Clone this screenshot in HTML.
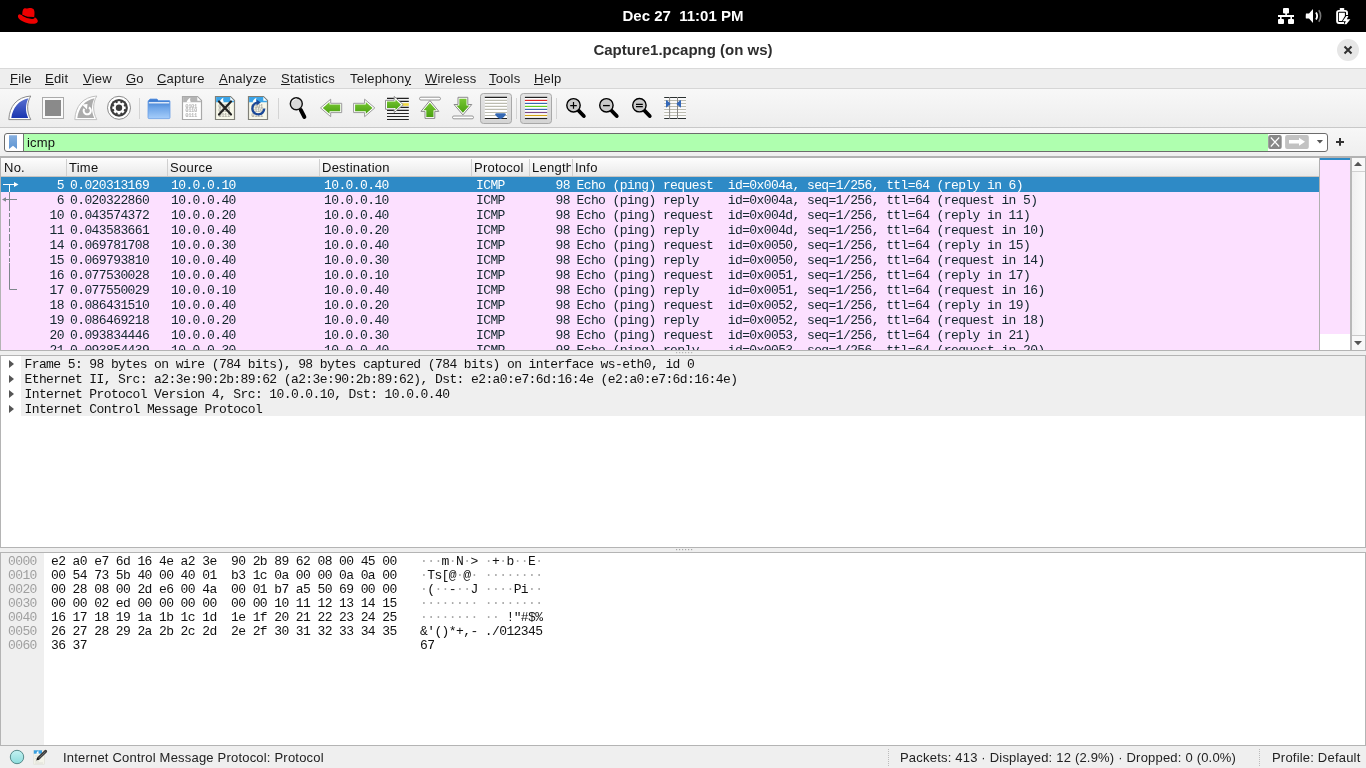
<!DOCTYPE html>
<html><head><meta charset="utf-8">
<style>
*{margin:0;padding:0;box-sizing:border-box}
html,body{width:1366px;height:768px;overflow:hidden;background:#fff;font-family:"Liberation Sans",sans-serif;}
.a{position:absolute}
#top{left:0;top:0;width:1366px;height:32px;background:#000}
#clock{left:0;top:0;width:1366px;height:32px;line-height:32px;text-align:center;color:#fff;font-weight:bold;font-size:15px}
#title{left:0;top:32px;width:1366px;height:36px;line-height:36px;text-align:center;color:#2e2e2e;font-weight:bold;font-size:15px}
#closebtn{left:1337px;top:39px;width:22px;height:22px;border-radius:50%;background:#e6e6e6}
#menubar{left:0;top:68px;width:1366px;height:21px;background:#eeeeee;border-top:1px solid #d9d9d9;border-bottom:1px solid #d6d6d6}
.menu{top:71px;font-size:13px;color:#1a1a1a;white-space:nowrap;letter-spacing:0.2px}
.menu u{text-decoration:underline;text-underline-offset:1px}
#toolbar{left:0;top:89px;width:1366px;height:39px;background:linear-gradient(#f8f8f8,#ededed);border-bottom:1px solid #c8c8c8}
.sep{top:98px;width:1px;height:21px;background:#d4d4d4}
#filterbar{left:0;top:128px;width:1366px;height:28px;background:linear-gradient(#f7f7f7,#efefef)}
#filter{left:4px;top:133px;width:1324px;height:19px;border:1px solid #6c6c6c;border-radius:3px;background:#fff;overflow:hidden}
#fgreen{left:18px;top:0;width:1245px;height:17px;background:#afffaf;border-left:1px solid #707070}
#ftext{left:22px;top:1px;font-size:13px;color:#111;letter-spacing:0.2px}
#plist{left:0;top:156px;width:1366px;height:195px;background:#fff;border:1px solid #b4b4b4;border-top:2px solid #b2b2b2;border-bottom:1px solid #b4b4b4}
#hdr{left:1px;top:158px;width:1319px;height:19px;background:linear-gradient(#fdfdfd,#e9e9e9);border-bottom:1px solid #c8c4c0}
.hc{top:160px;font-size:13px;color:#111;white-space:nowrap;letter-spacing:0.25px}
.hd{top:159px;width:1px;height:17px;background:#d0d0d0}
#rows{left:1px;top:177px;width:1318px;height:173px;overflow:hidden}
.row{left:0;width:1318px;height:15px;background:#fce0ff}
.sel{background:#2e8ac6}
.m{font-family:"Liberation Mono",monospace;font-size:13px;letter-spacing:-0.6px;white-space:pre;line-height:15px;color:#12272e;top:1px}
.sel .m{color:#fff}
.c0{right:1255px}
.c1{left:69px}.c2{left:170px}.c3{left:323px}.c4{left:475px}.c5{right:749px}.c6{left:575.5px}
#mm{left:1319px;top:158px;width:32px;height:192px;background:#fce0ff;border-left:1px solid #b0b0b0;border-right:1px solid #b8b8b8}
#sb{left:1351px;top:158px;width:14px;height:192px;background:linear-gradient(90deg,#f0f0f0,#fafafa);border-left:1px solid #b8b8b8}
#split1{left:0;top:351px;width:1366px;height:4px;background:#efefef}
#details{left:0;top:355px;width:1366px;height:193px;background:#fff;border:1px solid #b4b4b4}
.drow{left:21px;width:1344px;height:15px;background:#efefef}
.dm{font-family:"Liberation Mono",monospace;font-size:13px;letter-spacing:-0.6px;white-space:pre;line-height:15px;color:#111;left:24.5px;margin-top:1px}
.arr{left:9px;width:0;height:0;border-left:5px solid #555;border-top:4px solid transparent;border-bottom:4px solid transparent}
#split2{left:0;top:548px;width:1366px;height:5px;background:#efefef}
#hexp{left:0;top:552px;width:1366px;height:194px;background:#fff;border:1px solid #b4b4b4}
#offbg{left:1px;top:553px;width:43px;height:192px;background:#efefef}
#hexc{left:0;top:555px;width:1366px;height:192px}
.hm{font-family:"Liberation Mono",monospace;font-size:13px;letter-spacing:-0.6px;white-space:pre;line-height:14px;color:#111}
.off{left:8px;color:#a0a0a0}
.hexb{left:51px}
.asc{left:420px}
#status{left:0;top:746px;width:1366px;height:22px;background:#efefef}
.st{top:750px;font-size:13px;color:#222;white-space:nowrap;letter-spacing:0.2px}
.vsep{top:749px;width:1px;height:17px;border-left:1px dotted #bbb}

.dot{color:#a8a8a8}

</style></head><body>
<div id="wrap" style="position:absolute;left:0;top:0;width:1366px;height:768px;will-change:transform">
<div class="a" id="top"></div>
<div class="a" id="clock">Dec 27&nbsp;&nbsp;11:01 PM</div>
<div class="a" id="title">Capture1.pcapng (on ws)</div>
<div class="a" id="closebtn"></div>
<div class="a" id="menubar"></div>
<div class="a menu" style="left:10px"><u>F</u>ile</div>
<div class="a menu" style="left:45px"><u>E</u>dit</div>
<div class="a menu" style="left:83px"><u>V</u>iew</div>
<div class="a menu" style="left:126px"><u>G</u>o</div>
<div class="a menu" style="left:157px"><u>C</u>apture</div>
<div class="a menu" style="left:219px"><u>A</u>nalyze</div>
<div class="a menu" style="left:281px"><u>S</u>tatistics</div>
<div class="a menu" style="left:350px">Telephon<u>y</u></div>
<div class="a menu" style="left:425px"><u>W</u>ireless</div>
<div class="a menu" style="left:489px"><u>T</u>ools</div>
<div class="a menu" style="left:534px"><u>H</u>elp</div>
<div class="a" id="toolbar"></div>
<div class="a sep" style="left:139px"></div>
<div class="a sep" style="left:278px"></div>
<div class="a sep" style="left:516px"></div>
<div class="a sep" style="left:556px"></div>
<svg class="a" style="left:0;top:0" width="1366" height="768" viewBox="0 0 1366 768">
<defs>
<linearGradient id="gblue" x1="0" y1="0" x2="0" y2="1"><stop offset="0" stop-color="#5a70d0"/><stop offset="1" stop-color="#1a36b0"/></linearGradient>
<linearGradient id="gfold" x1="0" y1="0" x2="0" y2="1"><stop offset="0" stop-color="#3474cc"/><stop offset="0.45" stop-color="#6fa6e8"/><stop offset="1" stop-color="#a6cdfa"/></linearGradient>
<linearGradient id="ggreen" x1="0" y1="0" x2="0" y2="1"><stop offset="0" stop-color="#78c832"/><stop offset="1" stop-color="#4aa012"/></linearGradient>
<linearGradient id="gbtn" x1="0" y1="0" x2="0" y2="1"><stop offset="0" stop-color="#e4e4e4"/><stop offset="1" stop-color="#d4d4d4"/></linearGradient>
<linearGradient id="gcirc" x1="0" y1="0" x2="0" y2="1"><stop offset="0" stop-color="#c8f0f0"/><stop offset="1" stop-color="#8adada"/></linearGradient>
</defs>
<!-- red hat -->
<g fill="#ee0000">
<path d="M22.5,16.5 C22,13 22.5,9 24.5,8.3 C26,7.9 27,8.8 28.3,8.3 C30,7.6 32.5,7.8 33.8,9.5 C34.8,11 34.6,14 34.2,17 Z"/>
<path d="M19.5,14.2 C17.5,14.6 17.4,17.2 19.5,19.2 C22.5,22 28,23.8 33,23.7 C36.5,23.6 38.4,22.4 37.6,20.2 C37,18.6 35.5,17.6 34.3,17 C34.2,18 33.6,18.6 31.5,18.3 C28,17.8 24,16.5 22.3,15.3 Z"/>
</g>
<path d="M22.4,15.3 C25,17 29,18.2 32,18.5 C33.5,18.6 34.2,18.3 34.3,17" stroke="#000" stroke-width="1.2" fill="none"/>
<!-- network -->
<g fill="#fff">
<rect x="1283" y="8" width="6" height="5.5" rx="1"/>
<rect x="1285.3" y="13" width="1.6" height="3"/>
<rect x="1278" y="15" width="16" height="2"/>
<rect x="1280" y="16" width="1.6" height="3.5"/>
<rect x="1290.4" y="16" width="1.6" height="3.5"/>
<rect x="1278" y="19" width="6" height="5" rx="1"/>
<rect x="1288" y="19" width="6" height="5" rx="1"/>
</g>
<!-- speaker -->
<path d="M1306,13.5 L1309,13.5 L1313,9 L1313,23 L1309,18.5 L1306,18.5 C1305.6,18.5 1305.8,13.5 1306,13.5Z" fill="#fff"/>
<path d="M1316,12.5 C1317.3,14.5 1317.3,17.5 1316,19.5" stroke="#fff" stroke-width="1.8" fill="none"/>
<path d="M1318.8,10.3 C1321.2,13.5 1321.2,18.5 1318.8,21.7" stroke="#777" stroke-width="1.6" fill="none"/>
<!-- battery -->
<rect x="1339.8" y="7.9" width="4.4" height="2.5" rx="0.6" fill="#fff"/>
<path d="M1347,15 L1347,12.8 C1347,11.6 1346.3,10.9 1345.1,10.9 L1339,10.9 C1337.8,10.9 1337.1,11.6 1337.1,12.8 L1337.1,21.1 C1337.1,22.3 1337.8,23 1339,23 L1344,23" stroke="#fff" stroke-width="1.9" fill="none"/>
<path d="M1338.9,12.8 L1344.9,12.8 L1344.9,16 L1341.9,21 L1338.9,21 Z" fill="#fff"/>
<path d="M1346.3,16 L1348.4,16 L1346.8,19.2 L1350.4,19.2 L1346.4,24.2 L1344.3,24.2 L1345.9,21.2 L1342.6,21.2 Z" fill="#fff"/>
<!-- title close X -->
<path d="M1344.5,46.5 L1351.5,53.5 M1351.5,46.5 L1344.5,53.5" stroke="#2e2e2e" stroke-width="2"/>

<!-- toolbar: shark fin (start) -->
<path d="M8.8,119.6 C9.5,106 17,97 30.8,96 C27,102 26.2,111 30.8,119.6 Z" fill="#fff" stroke="#8c8c8c" stroke-width="1"/>
<path d="M11.3,118 C12.5,108 19,100 28.5,98.3 C25.5,104 25,111 28.2,118 Z" fill="url(#gblue)"/>
<!-- stop -->
<rect x="42.5" y="97.5" width="21" height="21" fill="#fafafa" stroke="#aaaaaa" stroke-width="1"/>
<rect x="45" y="100" width="16" height="16" fill="#8a8a8a"/>
<!-- restart fin -->
<path d="M74.8,119.6 C75.5,106 83,97 96.8,96 C93,102 92.2,111 96.8,119.6 Z" fill="#fff" stroke="#c0c0c0" stroke-width="1"/>
<path d="M77.3,118 C78.5,108 85,100 94.5,98.3 C91.5,104 91,111 94.2,118 Z" fill="#acacac"/>
<path d="M84.2,108.8 A3.6,3.6 0 1 0 88.8,107.5" stroke="#fff" stroke-width="2" fill="none"/>
<path d="M82,104.5 L87.5,104 L87,109.5 Z" fill="#fff"/>
<!-- gear -->
<circle cx="119" cy="107.8" r="11.5" fill="#fff" stroke="#8a8a8a" stroke-width="1"/>
<circle cx="119" cy="107.8" r="8.9" fill="#3c3c3c"/>
<g fill="#fff" transform="translate(119,107.8)">
<circle r="5.3"/>
<rect x="-1.3" y="-6.6" width="2.6" height="13.2"/>
<rect x="-1.3" y="-6.6" width="2.6" height="13.2" transform="rotate(45)"/>
<rect x="-1.3" y="-6.6" width="2.6" height="13.2" transform="rotate(90)"/>
<rect x="-1.3" y="-6.6" width="2.6" height="13.2" transform="rotate(135)"/>
<circle r="3.2" fill="#3c3c3c"/>
</g>
<!-- folder -->
<path d="M148.5,100.5 L150,99 L157,99 L158.5,100.5 L169,100.5 Q170,100.5 170,101.5 L170,117.5 Q170,118.6 169,118.6 L149,118.6 Q148,118.6 148,117.5 L148,101.5 Q148,100.5 148.5,100.5Z" fill="url(#gfold)" stroke="#6a9ee6" stroke-width="0.8"/>
<rect x="148.8" y="102.2" width="20.5" height="1.2" fill="#fff"/>
<!-- doc grey (save) -->
<path d="M182.5,96.5 L197.5,96.5 L201.5,100.5 L201.5,119.5 L182.5,119.5 Z" fill="#fff" stroke="#a8a8a8" stroke-width="1.2"/>
<path d="M183.1,97.1 L197.2,97.1 L200.9,100.8 L200.9,102.2 L183.1,102.2Z" fill="#b4b4b4"/>
<path d="M197.3,97.1 L197.3,100.8 L200.9,100.8Z" fill="#fff"/>
<path d="M186.5,102.2 C187.5,99.5 189,98.5 190.5,97.8 C189.8,99.3 190,101 191,102.2Z" fill="#fff"/>
<g fill="#b4b4b4" font-family="Liberation Mono" font-size="5.6" font-weight="bold" letter-spacing="-0.45"><text x="185.3" y="107.5">0101</text><text x="185.3" y="112">0110</text><text x="185.3" y="116.5">0111</text></g>
<!-- doc close -->
<path d="M215.5,96.5 L230.5,96.5 L234.5,100.5 L234.5,119.5 L215.5,119.5 Z" fill="#f8f8ea" stroke="#808078" stroke-width="1.2"/>
<path d="M216.1,97.1 L230.2,97.1 L233.9,100.8 L233.9,102.2 L216.1,102.2Z" fill="#3aa4e8"/>
<path d="M230.3,97.1 L230.3,100.8 L233.9,100.8Z" fill="#fff"/>
<path d="M219.5,102.2 C220.5,99.5 222,98.5 223.5,97.8 C222.8,99.3 223,101 224,102.2Z" fill="#fff"/>
<g fill="#a8a8a0" font-family="Liberation Mono" font-size="5.6" font-weight="bold" letter-spacing="-0.45"><text x="218.3" y="107.5">0101</text><text x="218.3" y="112">0110</text><text x="218.3" y="116.5">0111</text></g>
<path d="M219,101.5 L231,114.5 M231,101.5 L219,114.5" stroke="#222" stroke-width="2.2" stroke-linecap="round"/>
<!-- doc reload -->
<path d="M248.5,96.5 L263.5,96.5 L267.5,100.5 L267.5,119.5 L248.5,119.5 Z" fill="#f8f8ea" stroke="#808078" stroke-width="1.2"/>
<path d="M249.1,97.1 L263.2,97.1 L266.9,100.8 L266.9,102.2 L249.1,102.2Z" fill="#3aa4e8"/>
<path d="M263.3,97.1 L263.3,100.8 L266.9,100.8Z" fill="#fff"/>
<path d="M252.5,102.2 C253.5,99.5 255,98.5 256.5,97.8 C255.8,99.3 256,101 257,102.2Z" fill="#fff"/>
<g fill="#a8a8a0" font-family="Liberation Mono" font-size="5.6" font-weight="bold" letter-spacing="-0.45"><text x="251.3" y="107.5">0101</text><text x="251.3" y="112">0110</text><text x="251.3" y="116.5">0111</text></g>
<path d="M264.3,108.5 A6,6 0 1 1 257.5,102.5" stroke="#1a4898" stroke-width="2.2" fill="none"/>
<path d="M256.5,99.5 L260.8,102.5 L256.5,105.5 Z" fill="#1a4898"/>
<!-- find magnifier -->
<path d="M300.8,110 L304.4,117" stroke="#000" stroke-width="3.9" stroke-linecap="round"/>
<circle cx="296.3" cy="103.8" r="6" fill="#d8d8d8" stroke="#111" stroke-width="1.4"/>
<path d="M292.5,101.5 C293.3,99.8 294.8,99 296.5,99" stroke="#fff" stroke-width="0.9" fill="none"/>
<!-- left arrow -->
<path d="M320.5,107.9 L330.7,99.2 L330.7,103.3 L341.7,103.3 L341.7,112.6 L330.7,112.6 L330.7,116.7 Z" fill="#fff" stroke="#9a9a9a" stroke-width="1" stroke-linejoin="round"/>
<path d="M322.8,107.9 L329.5,102 L329.5,104.6 L340.2,104.6 L340.2,111.2 L329.5,111.2 L329.5,113.8 Z" fill="url(#ggreen)"/>
<!-- right arrow -->
<path d="M374.8,107.9 L364.6,99.2 L364.6,103.3 L353.6,103.3 L353.6,112.6 L364.6,112.6 L364.6,116.7 Z" fill="#fff" stroke="#9a9a9a" stroke-width="1" stroke-linejoin="round"/>
<path d="M372.5,107.9 L365.8,102 L365.8,104.6 L355.1,104.6 L355.1,111.2 L365.8,111.2 L365.8,113.8 Z" fill="url(#ggreen)"/>
<!-- go to packet -->
<g stroke="#222" stroke-width="1.1">
<path d="M387,98.4 H408.8 M387,101.4 H408.8 M387,107.4 H408.8 M387,110.4 H408.8 M387,113.5 H408.8 M387,116.5 H408.8 M387,119.5 H408.8"/>
</g>
<rect x="401" y="103.2" width="7.8" height="2.6" fill="#f0d840"/>
<path d="M403.2,104.7 L394.2,96.4 L394.2,100.3 L385.5,100.3 L385.5,109.3 L394.2,109.3 L394.2,112.6 Z" fill="#fff" stroke="#909090" stroke-width="1" stroke-linejoin="round"/>
<path d="M401,104.7 L395.5,99.4 L395.5,101.6 L387,101.6 L387,107.9 L395.5,107.9 L395.5,110 Z" fill="url(#ggreen)"/>
<!-- first packet up -->
<rect x="419.5" y="97.2" width="21" height="2.8" rx="1.4" fill="#fff" stroke="#8a8a8a" stroke-width="0.9"/>
<path d="M429.9,100.5 L438.8,111.4 L434.8,111.4 L434.8,118.4 L425,118.4 L425,111.4 L421,111.4 Z" fill="#fff" stroke="#8a8a8a" stroke-width="1" stroke-linejoin="round"/>
<path d="M429.9,102.7 L436.4,110.3 L433.5,110.3 L433.5,117 L426.3,117 L426.3,110.3 L423.4,110.3 Z" fill="url(#ggreen)"/>
<!-- last packet down -->
<rect x="452.5" y="116" width="21" height="2.8" rx="1.4" fill="#fff" stroke="#8a8a8a" stroke-width="0.9"/>
<path d="M462.9,114.9 L471.8,104.5 L467.8,104.5 L467.8,97.3 L458,97.3 L458,104.5 L454,104.5 Z" fill="#fff" stroke="#8a8a8a" stroke-width="1" stroke-linejoin="round"/>
<path d="M462.9,112.8 L469.4,105.6 L466.5,105.6 L466.5,98.7 L459.3,98.7 L459.3,105.6 L456.4,105.6 Z" fill="url(#ggreen)"/>
<!-- autoscroll button -->
<rect x="480.5" y="93.5" width="31" height="30" rx="3" fill="url(#gbtn)" stroke="#a8a8a8" stroke-width="1"/>
<rect x="484.8" y="96.9" width="22.2" height="22.2" fill="#fff"/>
<g stroke-width="1.1">
<path d="M484.8,97.4 H507 M484.8,118.5 H507" stroke="#222"/>
<path d="M484.8,100.4 H507 M484.8,103.4 H507 M484.8,106.4 H507 M484.8,109.4 H507 M484.8,112.5 H507 M484.8,115.5 H507" stroke="#bcbcb0"/>
</g>
<path d="M496.5,113.2 L504.5,113.2 Q506.3,113.2 505.8,114.8 Q504,117.5 501.8,118.6 Q500.5,119.2 499.2,118.6 Q497,117.5 495.2,114.8 Q494.7,113.2 496.5,113.2 Z" fill="#3468b4"/>
<!-- colorize button -->
<rect x="520.5" y="93.5" width="31" height="30" rx="3" fill="url(#gbtn)" stroke="#a8a8a8" stroke-width="1"/>
<rect x="524.9" y="96.9" width="22.3" height="22.2" fill="#fff"/>
<g stroke-width="1.2">
<path d="M524.9,97.4 H547.2" stroke="#222"/><path d="M524.9,100.4 H547.2" stroke="#e02424"/>
<path d="M524.9,103.4 H547.2" stroke="#3a68b0"/><path d="M524.9,106.4 H547.2" stroke="#62cc1c"/>
<path d="M524.9,109.4 H547.2" stroke="#3a68b0"/><path d="M524.9,112.5 H547.2" stroke="#7a4a88"/>
<path d="M524.9,115.5 H547.2" stroke="#d0a414"/><path d="M524.9,118.5 H547.2" stroke="#222"/>
</g>
<!-- zoom in/out/normal -->
<g stroke="#000">
<path d="M578.5,110.5 L583.8,116" stroke-width="3.9" stroke-linecap="round"/>
<circle cx="573.5" cy="105.3" r="6.7" fill="#cacaca" stroke-width="1.4"/>
<path d="M570.2,105.6 H576.8 M573.5,102.1 V108.8" stroke-width="1.2"/>
<path d="M611.4,110.5 L616.7,116" stroke-width="3.9" stroke-linecap="round"/>
<circle cx="606.4" cy="105.3" r="6.7" fill="#cacaca" stroke-width="1.4"/>
<path d="M603,105.6 H609.8" stroke-width="1.3"/>
<path d="M644.4,110.5 L649.7,116" stroke-width="3.9" stroke-linecap="round"/>
<circle cx="639.4" cy="105.2" r="6.7" fill="#cacaca" stroke-width="1.4"/>
<path d="M636,104.4 H642.8 M636,106.6 H642.8" stroke-width="1.2"/>
</g>
<!-- resize columns -->
<rect x="664.2" y="97" width="21.8" height="22" fill="#fafafa"/>
<g stroke-width="1.1">
<path d="M664.2,100.5 H686 M664.2,103.5 H686 M664.2,106.5 H686 M664.2,109.5 H686 M664.2,112.5 H686 M664.2,115.5 H686" stroke="#bcbcb0"/>
<path d="M664.2,97.5 H686 M664.2,118.5 H686" stroke="#2a3030" stroke-width="1.2"/>
<path d="M669.6,97 V119 M677.5,97 V119" stroke="#8a8a88" stroke-width="1"/>
</g>
<path d="M666,100.6 Q666,99.8 666.8,100.3 L670.2,103.3 Q670.6,103.8 670.2,104.3 L666.8,107.3 Q666,107.8 666,107 Z" fill="#3468b8"/>
<path d="M681,100.6 Q681,99.8 680.2,100.3 L676.8,103.3 Q676.4,103.8 676.8,104.3 L680.2,107.3 Q681,107.8 681,107 Z" fill="#3468b8"/>
</svg>

<div class="a" id="filterbar"></div>
<div class="a" id="filter"><div class="a" id="fgreen"></div><div class="a" id="ftext">icmp</div></div>
<div class="a" id="plist"></div>
<div class="a" id="hdr"></div>
<div class="a hc" style="left:4px">No.</div>
<div class="a hd" style="left:66px"></div>
<div class="a hc" style="left:69px">Time</div>
<div class="a hd" style="left:167px"></div>
<div class="a hc" style="left:170px">Source</div>
<div class="a hd" style="left:319px"></div>
<div class="a hc" style="left:322px">Destination</div>
<div class="a hd" style="left:471px"></div>
<div class="a hc" style="left:474px">Protocol</div>
<div class="a hd" style="left:529px"></div>
<div class="a hc" style="left:532px;width:39px;overflow:hidden">Length</div>
<div class="a hd" style="left:572px"></div>
<div class="a hc" style="left:575px">Info</div>
<div class="a" id="rows">
<div class="a row sel" style="top:0px"><span class="a m c0">5</span><span class="a m c1">0.020313169</span><span class="a m c2">10.0.0.10</span><span class="a m c3">10.0.0.40</span><span class="a m c4">ICMP</span><span class="a m c5">98</span><span class="a m c6">Echo (ping) request  id=0x004a, seq=1/256, ttl=64 (reply in 6)</span></div>
<div class="a row" style="top:15px"><span class="a m c0">6</span><span class="a m c1">0.020322860</span><span class="a m c2">10.0.0.40</span><span class="a m c3">10.0.0.10</span><span class="a m c4">ICMP</span><span class="a m c5">98</span><span class="a m c6">Echo (ping) reply    id=0x004a, seq=1/256, ttl=64 (request in 5)</span></div>
<div class="a row" style="top:30px"><span class="a m c0">10</span><span class="a m c1">0.043574372</span><span class="a m c2">10.0.0.20</span><span class="a m c3">10.0.0.40</span><span class="a m c4">ICMP</span><span class="a m c5">98</span><span class="a m c6">Echo (ping) request  id=0x004d, seq=1/256, ttl=64 (reply in 11)</span></div>
<div class="a row" style="top:45px"><span class="a m c0">11</span><span class="a m c1">0.043583661</span><span class="a m c2">10.0.0.40</span><span class="a m c3">10.0.0.20</span><span class="a m c4">ICMP</span><span class="a m c5">98</span><span class="a m c6">Echo (ping) reply    id=0x004d, seq=1/256, ttl=64 (request in 10)</span></div>
<div class="a row" style="top:60px"><span class="a m c0">14</span><span class="a m c1">0.069781708</span><span class="a m c2">10.0.0.30</span><span class="a m c3">10.0.0.40</span><span class="a m c4">ICMP</span><span class="a m c5">98</span><span class="a m c6">Echo (ping) request  id=0x0050, seq=1/256, ttl=64 (reply in 15)</span></div>
<div class="a row" style="top:75px"><span class="a m c0">15</span><span class="a m c1">0.069793810</span><span class="a m c2">10.0.0.40</span><span class="a m c3">10.0.0.30</span><span class="a m c4">ICMP</span><span class="a m c5">98</span><span class="a m c6">Echo (ping) reply    id=0x0050, seq=1/256, ttl=64 (request in 14)</span></div>
<div class="a row" style="top:90px"><span class="a m c0">16</span><span class="a m c1">0.077530028</span><span class="a m c2">10.0.0.40</span><span class="a m c3">10.0.0.10</span><span class="a m c4">ICMP</span><span class="a m c5">98</span><span class="a m c6">Echo (ping) request  id=0x0051, seq=1/256, ttl=64 (reply in 17)</span></div>
<div class="a row" style="top:105px"><span class="a m c0">17</span><span class="a m c1">0.077550029</span><span class="a m c2">10.0.0.10</span><span class="a m c3">10.0.0.40</span><span class="a m c4">ICMP</span><span class="a m c5">98</span><span class="a m c6">Echo (ping) reply    id=0x0051, seq=1/256, ttl=64 (request in 16)</span></div>
<div class="a row" style="top:120px"><span class="a m c0">18</span><span class="a m c1">0.086431510</span><span class="a m c2">10.0.0.40</span><span class="a m c3">10.0.0.20</span><span class="a m c4">ICMP</span><span class="a m c5">98</span><span class="a m c6">Echo (ping) request  id=0x0052, seq=1/256, ttl=64 (reply in 19)</span></div>
<div class="a row" style="top:135px"><span class="a m c0">19</span><span class="a m c1">0.086469218</span><span class="a m c2">10.0.0.20</span><span class="a m c3">10.0.0.40</span><span class="a m c4">ICMP</span><span class="a m c5">98</span><span class="a m c6">Echo (ping) reply    id=0x0052, seq=1/256, ttl=64 (request in 18)</span></div>
<div class="a row" style="top:150px"><span class="a m c0">20</span><span class="a m c1">0.093834446</span><span class="a m c2">10.0.0.40</span><span class="a m c3">10.0.0.30</span><span class="a m c4">ICMP</span><span class="a m c5">98</span><span class="a m c6">Echo (ping) request  id=0x0053, seq=1/256, ttl=64 (reply in 21)</span></div>
<div class="a row" style="top:165px"><span class="a m c0">21</span><span class="a m c1">0.093854439</span><span class="a m c2">10.0.0.30</span><span class="a m c3">10.0.0.40</span><span class="a m c4">ICMP</span><span class="a m c5">98</span><span class="a m c6">Echo (ping) reply    id=0x0053, seq=1/256, ttl=64 (request in 20)</span></div>
</div>
<div class="a" id="mm"></div>
<div class="a" id="sb"></div>
<div class="a" id="split1"></div>
<div class="a" id="details"></div>
<div class="a drow" style="top:356px"></div>
<div class="a drow" style="top:371px"></div>
<div class="a drow" style="top:386px"></div>
<div class="a drow" style="top:401px"></div>
<div class="a dm" style="top:356px">Frame 5: 98 bytes on wire (784 bits), 98 bytes captured (784 bits) on interface ws-eth0, id 0</div>
<div class="a dm" style="top:371px">Ethernet II, Src: a2:3e:90:2b:89:62 (a2:3e:90:2b:89:62), Dst: e2:a0:e7:6d:16:4e (e2:a0:e7:6d:16:4e)</div>
<div class="a dm" style="top:386px">Internet Protocol Version 4, Src: 10.0.0.10, Dst: 10.0.0.40</div>
<div class="a dm" style="top:401px">Internet Control Message Protocol</div>
<div class="a arr" style="top:360px"></div>
<div class="a arr" style="top:375px"></div>
<div class="a arr" style="top:390px"></div>
<div class="a arr" style="top:405px"></div>
<div class="a" id="split2"></div>
<div class="a" id="hexp"></div>
<div class="a" id="offbg"></div>
<div class="a" id="hexc">
<div class="a hm off" style="top:0px">0000</div><div class="a hm hexb" style="top:0px">e2 a0 e7 6d 16 4e a2 3e  90 2b 89 62 08 00 45 00</div><div class="a hm asc" style="top:0px"><span class="dot">·</span><span class="dot">·</span><span class="dot">·</span>m<span class="dot">·</span>N<span class="dot">·</span>&gt; <span class="dot">·</span>+<span class="dot">·</span>b<span class="dot">·</span><span class="dot">·</span>E<span class="dot">·</span></div>
<div class="a hm off" style="top:14px">0010</div><div class="a hm hexb" style="top:14px">00 54 73 5b 40 00 40 01  b3 1c 0a 00 00 0a 0a 00</div><div class="a hm asc" style="top:14px"><span class="dot">·</span>Ts[@<span class="dot">·</span>@<span class="dot">·</span> <span class="dot">·</span><span class="dot">·</span><span class="dot">·</span><span class="dot">·</span><span class="dot">·</span><span class="dot">·</span><span class="dot">·</span><span class="dot">·</span></div>
<div class="a hm off" style="top:28px">0020</div><div class="a hm hexb" style="top:28px">00 28 08 00 2d e6 00 4a  00 01 b7 a5 50 69 00 00</div><div class="a hm asc" style="top:28px"><span class="dot">·</span>(<span class="dot">·</span><span class="dot">·</span>-<span class="dot">·</span><span class="dot">·</span>J <span class="dot">·</span><span class="dot">·</span><span class="dot">·</span><span class="dot">·</span>Pi<span class="dot">·</span><span class="dot">·</span></div>
<div class="a hm off" style="top:42px">0030</div><div class="a hm hexb" style="top:42px">00 00 02 ed 00 00 00 00  00 00 10 11 12 13 14 15</div><div class="a hm asc" style="top:42px"><span class="dot">·</span><span class="dot">·</span><span class="dot">·</span><span class="dot">·</span><span class="dot">·</span><span class="dot">·</span><span class="dot">·</span><span class="dot">·</span> <span class="dot">·</span><span class="dot">·</span><span class="dot">·</span><span class="dot">·</span><span class="dot">·</span><span class="dot">·</span><span class="dot">·</span><span class="dot">·</span></div>
<div class="a hm off" style="top:56px">0040</div><div class="a hm hexb" style="top:56px">16 17 18 19 1a 1b 1c 1d  1e 1f 20 21 22 23 24 25</div><div class="a hm asc" style="top:56px"><span class="dot">·</span><span class="dot">·</span><span class="dot">·</span><span class="dot">·</span><span class="dot">·</span><span class="dot">·</span><span class="dot">·</span><span class="dot">·</span> <span class="dot">·</span><span class="dot">·</span> !&quot;#$%</div>
<div class="a hm off" style="top:70px">0050</div><div class="a hm hexb" style="top:70px">26 27 28 29 2a 2b 2c 2d  2e 2f 30 31 32 33 34 35</div><div class="a hm asc" style="top:70px">&amp;&#x27;()*+,- ./012345</div>
<div class="a hm off" style="top:84px">0060</div><div class="a hm hexb" style="top:84px">36 37</div><div class="a hm asc" style="top:84px">67</div>
</div>
<div class="a" id="status"></div>
<div class="a st" style="left:63px">Internet Control Message Protocol: Protocol</div>
<div class="a vsep" style="left:888px"></div>
<div class="a st" style="left:900px">Packets: 413 · Displayed: 12 (2.9%) · Dropped: 0 (0.0%)</div>
<div class="a vsep" style="left:1259px"></div>
<div class="a st" style="left:1272px">Profile: Default</div>

<svg class="a" style="left:0;top:0" width="1366" height="768" viewBox="0 0 1366 768">
<defs>
<linearGradient id="gbm" x1="0" y1="0" x2="0" y2="1"><stop offset="0" stop-color="#86afe0"/><stop offset="1" stop-color="#5f95d2"/></linearGradient>
<linearGradient id="gcy" x1="0" y1="0" x2="0" y2="1"><stop offset="0" stop-color="#c4f2f2"/><stop offset="1" stop-color="#8cdcdc"/></linearGradient>
</defs>
<!-- bookmark -->
<path d="M9,135.2 L17,135.2 L17,149 L13,145.8 L9,149 Z" fill="url(#gbm)"/>
<!-- clear X button -->
<rect x="1268.2" y="135" width="13.5" height="14" rx="2" fill="#888"/>
<path d="M1270.8,137.5 L1279.2,146.5 M1279.2,137.5 L1270.8,146.5" stroke="#fff" stroke-width="1.1"/>
<!-- apply arrow button -->
<rect x="1285.1" y="135" width="23.7" height="14" rx="2" fill="#c2c2c2"/>
<path d="M1289,140 L1299,140 L1299,137.8 L1305,141.8 L1299,145.8 L1299,143.6 L1289,143.6 Z" fill="#fff"/>
<!-- dropdown -->
<path d="M1316.8,140 L1323,140 L1319.9,143.5 Z" fill="#555"/>
<!-- plus -->
<path d="M1336,141.9 H1344 M1340,138 V145.8" stroke="#333" stroke-width="2"/>
<!-- tree lines -->
<path d="M3,184.5 H15" stroke="#fff" stroke-width="1"/>
<path d="M14,182 L18.5,184.5 L14,187 Z" fill="#fff"/>
<path d="M9.5,184.5 V192" stroke="#fff" stroke-width="1"/>
<path d="M9.5,192 V211" stroke="#7e868c" stroke-width="1"/>
<path d="M5,199.5 H17" stroke="#7e868c" stroke-width="1"/>
<path d="M6,197.2 L2,199.5 L6,201.8 Z" fill="#7e868c"/>
<path d="M9.5,211 V263" stroke="#7e868c" stroke-width="1" stroke-dasharray="0 2 4 2 7 0"/>
<path d="M9.5,263 V289.5 H17" stroke="#7e868c" stroke-width="1" fill="none"/>
<!-- minimap -->
<rect x="1320" y="158" width="30" height="2" fill="#2e8ac6"/>
<rect x="1320" y="334" width="30" height="16" fill="#fff"/>
<!-- scrollbar -->
<rect x="1352" y="158" width="13" height="13" fill="#f8f8f8"/>
<path d="M1352,171.5 H1365" stroke="#d0d0d0" stroke-width="1"/>
<path d="M1354,177 H1362" stroke="none"/>
<path d="M1354,166 L1362,166 L1358,161.8 Z" fill="#555"/>
<rect x="1352" y="336" width="13" height="14" fill="#f8f8f8"/>
<path d="M1352,335.5 H1365" stroke="#c8c8c8" stroke-width="1"/>
<path d="M1354,341 L1362,341 L1358,345.2 Z" fill="#555"/>
<!-- status icons -->
<circle cx="17" cy="757" r="6.7" fill="url(#gcy)" stroke="#4a8080" stroke-width="0.9"/>
<rect x="33.8" y="750.3" width="10.8" height="13.9" fill="#f4f4ea" stroke="#dcdcd4" stroke-width="0.6"/>
<rect x="33.8" y="750.3" width="8.2" height="3.4" fill="#3aa0e0"/>
<path d="M36.3,753.7 C36.8,752.3 37.6,751.2 38.6,750.6 C38.2,751.6 38.4,752.8 39,753.7Z" fill="#fff"/>
<path d="M35,756 H42 M35,758.5 H41 M35,761 H39 M35,763 H43" stroke="#d8d8d0" stroke-width="0.8"/>
<path d="M38.6,758.2 L45.6,751.4" stroke="#3a3a3a" stroke-width="3" stroke-linecap="round"/>
<path d="M39.5,757.5 L45.5,751.6" stroke="#777" stroke-width="0.8"/>
<path d="M36.2,760.6 L37.2,757.4 L39.4,759.6 Z" fill="#111"/>
<!-- splitter handles -->
<g fill="#a8a8a8"><rect x="676" y="549" width="1.2" height="1.2"/><rect x="679" y="549" width="1.2" height="1.2"/><rect x="682" y="549" width="1.2" height="1.2"/><rect x="685" y="549" width="1.2" height="1.2"/><rect x="688" y="549" width="1.2" height="1.2"/><rect x="691" y="549" width="1.2" height="1.2"/></g>
<g fill="#b4b4b4"><rect x="676" y="352" width="1.2" height="1.2"/><rect x="679" y="352" width="1.2" height="1.2"/><rect x="682" y="352" width="1.2" height="1.2"/><rect x="685" y="352" width="1.2" height="1.2"/><rect x="688" y="352" width="1.2" height="1.2"/><rect x="691" y="352" width="1.2" height="1.2"/></g>
</svg>


</div></body></html>
